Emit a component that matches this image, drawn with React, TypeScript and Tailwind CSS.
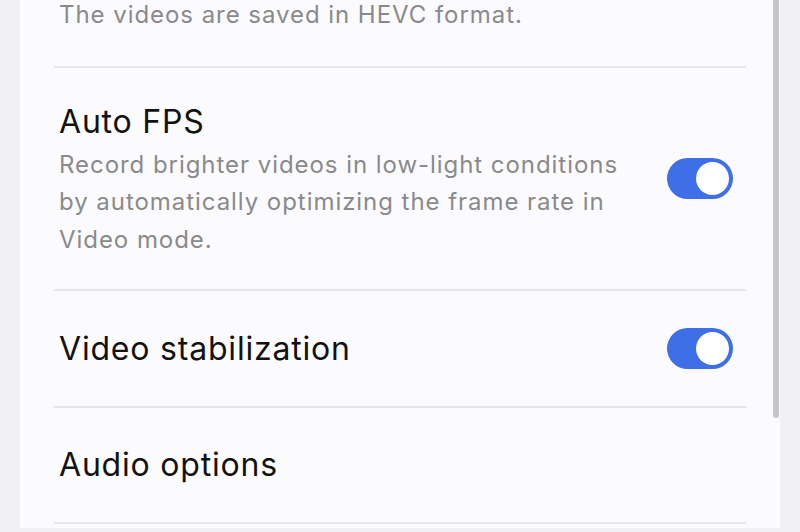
import React from 'react';

function Toggle({ on }: { on: boolean }) {
  return (
    <div
      className={
        'flex h-[41px] w-[66px] shrink-0 items-center rounded-full px-[4px] ' +
        (on ? 'justify-end bg-[#3f6fe6]' : 'justify-start bg-[#c9c9cc]')
      }
    >
      <div className="h-[33px] w-[33px] rounded-full bg-white" />
    </div>
  );
}

function Divider() {
  return <div className="mx-[34px] h-[2px] bg-[#e6e6e8]" />;
}

export default function App() {
  return (
    <div
      className="h-screen w-full overflow-hidden bg-[#f1f1f3] px-[20px]"
      style={{ fontFamily: 'Inter, "Noto Sans", sans-serif' }}
    >
      <div className="relative h-full bg-[#fbfbfd]">
        {/* tail of the previous row */}
        <div className="-mt-[4px] px-[39px] pb-[32px] text-[24px] leading-[37.5px] tracking-[0.95px] text-[#8a8a8c]">
          The videos are saved in HEVC format.
        </div>
        <Divider />

        <div className="flex items-center gap-6 pt-[32px] pb-[31px] pl-[39px] pr-[47px]">
          <div className="flex-1">
            <div className="text-[32px] leading-[44px] tracking-[0.8px] text-[#121212]">Auto FPS</div>
            <div className="mt-[2px] text-[24px] leading-[37.5px] tracking-[0.95px] text-[#8a8a8c]">
              Record brighter videos in low-light conditions
              <br />
              by automatically optimizing the frame rate in
              <br />
              Video mode.
            </div>
          </div>
          <Toggle on />
        </div>
        <Divider />

        <div className="flex h-[115px] items-center gap-6 pl-[39px] pr-[47px]">
          <div className="flex-1 text-[32px] leading-[44px] tracking-[0.8px] text-[#121212]">Video stabilization</div>
          <Toggle on />
        </div>
        <Divider />

        <div className="flex h-[114px] items-center pl-[39px] pr-[47px]">
          <div className="text-[32px] leading-[44px] tracking-[0.8px] text-[#121212]">Audio options</div>
        </div>
        <Divider />

        {/* scrollbar */}
        <div className="absolute right-[1px] top-0 h-[422px] w-[6px] rounded-b-full bg-[#c6c6c8]" />
      </div>
    </div>
  );
}
